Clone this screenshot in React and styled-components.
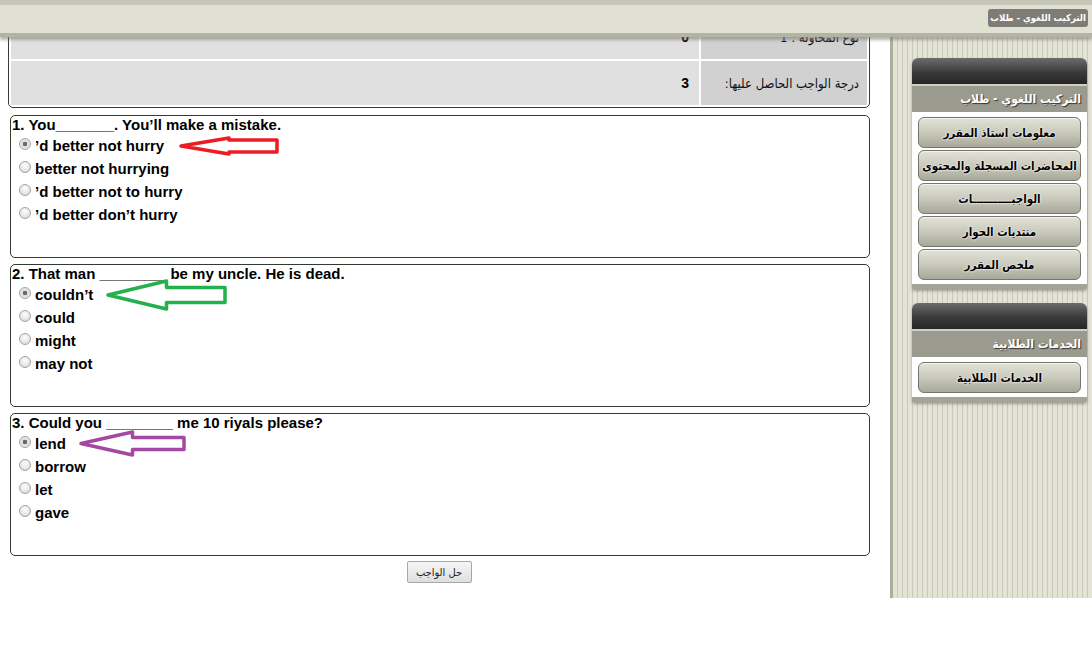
import React from "react";
import styled, { createGlobalStyle } from "styled-components";

const GlobalStyle = createGlobalStyle`
  body {
    margin: 0;
    background: #fff;
    font-family: "Liberation Sans", "DejaVu Sans Condensed", "DejaVu Sans", Arial, sans-serif;
    color: #000;
  }
`;

const arabic = `"DejaVu Sans Condensed", "DejaVu Sans", sans-serif`;

const questions = [
  {
    text: "1. You_______. You’ll make a mistake.",
    options: ["’d better not hurry", "better not hurrying", "’d better not to hurry", "’d better don’t hurry"],
    arrow: { color: "#ed1c24", width: 100, height: 20, body: 12, gap: 15 },
  },
  {
    text: "2. That man ________ be my uncle. He is dead.",
    options: ["couldn’t", "could", "might", "may not"],
    arrow: { color: "#22b14c", width: 121, height: 32, body: 15, gap: 13 },
  },
  {
    text: "3. Could you ________ me 10 riyals please?",
    options: ["lend", "borrow", "let", "gave"],
    arrow: { color: "#a349a4", width: 107, height: 27, body: 12, gap: 13 },
  },
];

const menus = [
  {
    title: "التركيب اللغوي - طلاب",
    links: ["معلومات استاذ المقرر", "المحاضرات المسجلة والمحتوى", "الواجبـــــــــــات", "منتديات الحوار", "ملخص المقرر"],
  },
  {
    title: "الخدمات الطلابية",
    links: ["الخدمات الطلابية"],
  },
];

// hand drawn outline arrow pointing at the chosen answer
const Arrow = ({ color, width, height, body, gap }) => {
  const mid = height / 2;
  const head = width * 0.5;
  const top = mid - body / 2;
  const bottom = mid + body / 2;
  return (
    <ArrowSvg $gap={gap} width={width} height={height} viewBox={`0 0 ${width} ${height}`}>
      <path
        d={`M2 ${mid} L${head} 2 L${head} ${top} L${width - 2} ${top} L${width - 2} ${bottom} L${head} ${bottom} L${head} ${height - 2} Z`}
        fill="none"
        stroke={color}
        strokeWidth="3.5"
        strokeLinejoin="round"
      />
    </ArrowSvg>
  );
};

const App = () => {
  return (
    <>
      <GlobalStyle />
      <TopBar>
        <CourseTag>التركيب اللغوي - طلاب</CourseTag>
      </TopBar>
      <Layout>
        <Main>
          <ScoreTable>
            <tbody>
              <tr>
                <ValueCell>0</ValueCell>
                <LabelCell>نوع المحاولة : 1</LabelCell>
              </tr>
              <tr>
                <ValueCell>3</ValueCell>
                <LabelCell>درجة الواجب الحاصل عليها:</LabelCell>
              </tr>
            </tbody>
          </ScoreTable>
          {questions.map((q, qi) => (
            <QuestionBox key={qi}>
              <QuestionText>{q.text}</QuestionText>
              {q.options.map((opt, oi) => (
                <Option key={oi}>
                  <Radio type="radio" name={`q${qi}`} defaultChecked={oi === 0} />
                  <span>{opt}</span>
                  {oi === 0 && <Arrow {...q.arrow} />}
                </Option>
              ))}
            </QuestionBox>
          ))}
          <SubmitRow>
            <SubmitButton>حل الواجب</SubmitButton>
          </SubmitRow>
        </Main>
        <Sidebar>
          {menus.map((m, i) => (
            <Panel key={i}>
              <PanelHead />
              <PanelTitle>{m.title}</PanelTitle>
              <PanelBody>
                {m.links.map((l) => (
                  <MenuButton key={l}>{l}</MenuButton>
                ))}
              </PanelBody>
            </Panel>
          ))}
        </Sidebar>
      </Layout>
    </>
  );
};

const TopBar = styled.header`
  position: fixed;
  top: 0;
  left: 0;
  right: 0;
  height: 37px;
  z-index: 10;
  box-sizing: border-box;
  background: #e1e1d3;
  border-top: 5px solid #c6c7b9;
  border-bottom: 4px solid #b3b3a6;
  box-shadow: 0 3px 3px rgba(120, 120, 110, 0.55);
  display: flex;
  justify-content: flex-end;
  align-items: flex-start;
  padding: 4px 4px 0 0;
`;

const CourseTag = styled.div`
  direction: rtl;
  background: #7e7d75;
  color: #fff;
  font-family: ${arabic};
  font-size: 9.5px;
  font-weight: bold;
  height: 18px;
  line-height: 18px;
  padding: 0 2px;
  border-radius: 3px;
  white-space: nowrap;
`;

const Layout = styled.div`
  display: flex;
  align-items: stretch;
`;

const Main = styled.main`
  width: 890px;
  flex: none;
  box-sizing: border-box;
  padding: 12px 20px 15px 8px;
  display: flex;
  flex-direction: column;
  gap: 6px;
`;

const ScoreTable = styled.table`
  width: 862px;
  border-collapse: separate;
  border-spacing: 2px;
  border: 1px solid #3a3a3a;
  border-radius: 5px;
  direction: ltr;
  margin-bottom: 1px;
`;

const ValueCell = styled.td`
  background: #e0e0e0;
  height: 44px;
  padding: 0 10px;
  text-align: right;
  font-weight: bold;
  font-size: 14px;
`;

const LabelCell = styled.td`
  background: #d1d1d1;
  width: 150px;
  height: 44px;
  padding: 0 8px;
  direction: rtl;
  text-align: right;
  font-family: ${arabic};
  font-size: 13px;
  color: #111;
  white-space: nowrap;
`;

const QuestionBox = styled.section`
  margin-left: 2px;
  width: 860px;
  height: 143px;
  box-sizing: border-box;
  border: 1px solid #2f3d2f;
  border-radius: 5px;
  padding: 0 0 0 1px;
`;

const QuestionText = styled.div`
  font-size: 15px;
  font-weight: bold;
  line-height: 17px;
  margin-bottom: 1px;
`;

const Option = styled.label`
  display: flex;
  align-items: center;
  height: 23px;
  padding-left: 7px;
  font-size: 15px;
  font-weight: bold;
`;

const Radio = styled.input`
  appearance: none;
  width: 12px;
  height: 12px;
  margin: 0 4px 0 0;
  border-radius: 50%;
  border: 1px solid #a3a3a3;
  background: radial-gradient(circle at 50% 35%, #fdfdfd 0, #e6e6e6 60%, #cfcfcf 100%);
  position: relative;
  top: -2px;
  &:checked {
    background: radial-gradient(circle, #6a6a6a 0 2px, #dcdcdc 2.5px, #f2f2f2 100%);
  }
`;

const ArrowSvg = styled.svg`
  margin-left: ${(p) => p.$gap}px;
  flex: none;
  overflow: visible;
`;

const SubmitRow = styled.div`
  width: 862px;
  display: flex;
  justify-content: center;
  margin-top: -1px;
`;

const SubmitButton = styled.button`
  width: 65px;
  height: 22px;
  font-family: ${arabic};
  font-size: 11px;
  color: #222;
  border: 1px solid #a7a7a7;
  border-radius: 2px;
  background: linear-gradient(#f6f6f6, #dedede);
  direction: rtl;
  padding: 0;
`;

const Sidebar = styled.aside`
  width: 202px;
  flex: none;
  box-sizing: border-box;
  padding: 58px 5px 0 22px;
  border-left: 3px solid #acac9f;
  background: repeating-linear-gradient(90deg, #e3e3d6 0 4px, #c9c9b9 4px 5px);
  display: flex;
  flex-direction: column;
  gap: 14px;
`;

const Panel = styled.div`
  width: 175px;
  margin-left: -3px;
  background: #fff;
  border-radius: 6px 6px 3px 3px;
  border-bottom: 5px solid #a3a398;
  box-shadow: 0 2px 3px rgba(90, 90, 80, 0.5);
  direction: rtl;
  overflow: hidden;
`;

const PanelHead = styled.div`
  height: 26px;
  background: linear-gradient(#6c6c6c, #3a3a3a 55%, #262626);
  border-bottom: 2px solid #cfcfc6;
`;

const PanelTitle = styled.div`
  height: 26px;
  line-height: 26px;
  background: #9a9a8f;
  color: #fff;
  font-family: ${arabic};
  font-weight: bold;
  font-size: 12px;
  padding-right: 6px;
  text-shadow: 1px 1px 1px #333;
  white-space: nowrap;
`;

const PanelBody = styled.div`
  display: flex;
  flex-direction: column;
  gap: 2px;
  padding: 5px 6px 4px 6px;
`;

const MenuButton = styled.div`
  height: 31px;
  box-sizing: border-box;
  border: 1px solid #75756b;
  border-radius: 6px;
  background: linear-gradient(#e2e2d8, #c9c9bc 50%, #a9a99a);
  box-shadow: inset 0 1px 0 #f4f4ee;
  display: flex;
  align-items: center;
  justify-content: center;
  font-family: ${arabic};
  font-size: 11.5px;
  font-weight: bold;
  color: #000;
  white-space: nowrap;
  text-shadow: 0 0 2px #fff, 0 0 2px #fff;
`;

export default App;
